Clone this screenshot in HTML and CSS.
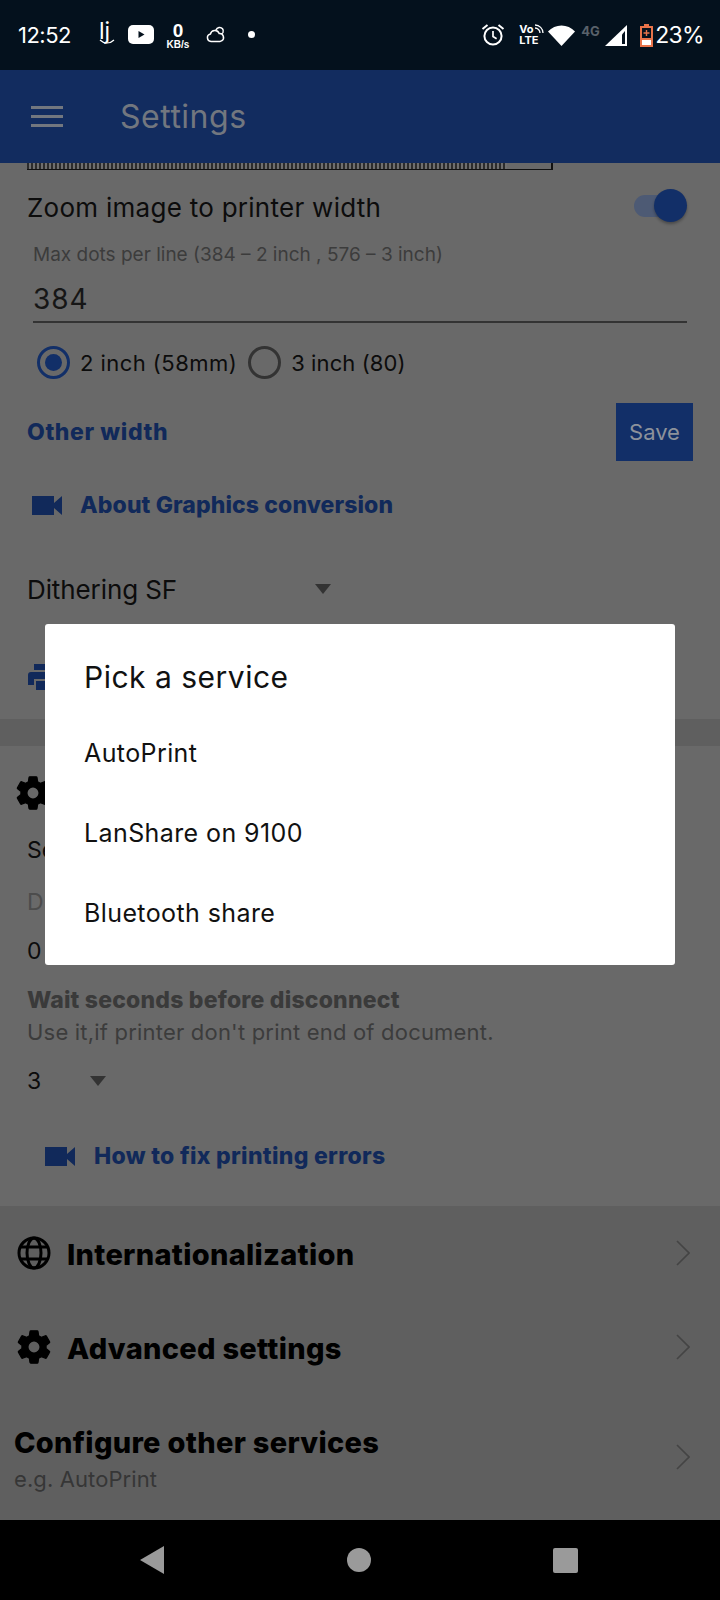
FILE: index.html
```html
<!DOCTYPE html>
<html lang="en">
<head>
    <meta name="viewport" content="width=device-width, initial-scale=1.0">
    <link rel="stylesheet" href="styles.css">
    <title>Settings</title>
</head>

<body>
    <svg class="defs" width="0" height="0">
        <symbol id="gear" viewBox="2 1.3 20 21.4">
            <path fill-rule="evenodd" stroke="#000" stroke-width="0.7" stroke-linejoin="round" d="M19.14 12.94c.04-.3.06-.61.06-.94 0-.32-.02-.64-.07-.94l2.03-1.58c.18-.14.23-.41.12-.61l-1.92-3.32c-.12-.22-.37-.29-.59-.22l-2.39.96c-.5-.38-1.03-.7-1.62-.94l-.36-2.54c-.04-.24-.24-.41-.48-.41h-3.84c-.24 0-.43.17-.47.41l-.36 2.54c-.59.24-1.13.57-1.62.94l-2.39-.96c-.22-.08-.47 0-.59.22L2.74 8.87c-.12.21-.08.47.12.61l2.03 1.58c-.05.3-.09.63-.09.94s.02.64.07.94l-2.03 1.58c-.18.14-.23.41-.12.61l1.92 3.32c.12.22.37.29.59.22l2.39-.96c.5.38 1.03.7 1.62.94l.36 2.54c.05.24.24.41.48.41h3.84c.24 0 .44-.17.47-.41l.36-2.54c.59-.24 1.13-.56 1.62-.94l2.39.96c.22.08.47 0 .59-.22l1.92-3.32c.12-.22.07-.47-.12-.61l-2.01-1.58zM12 15.600c-1.98 0-3.6-1.62-3.6-3.6s1.62-3.6 3.6-3.6 3.6 1.62 3.6 3.6-1.62 3.6-3.6 3.6z"/>
        </symbol>
        <symbol id="video" viewBox="0 0 30 20">
            <path d="M0 1h22v19H0zM22 8l8-7v19l-8-7z"/>
        </symbol>
        <symbol id="chevron" viewBox="0 0 14 26">
            <path d="M1 1l12 12L1 25" fill="none" stroke="#444" stroke-width="1.6"/>
        </symbol>
    </svg>

    <div class="status-bar">
        <span class="clock">12:52</span>
        <span class="app-mark">lj
            <svg width="16" height="6" viewBox="0 0 16 6"><path d="M1 1c4 4 10 4 14 0" fill="none" stroke="#fff" stroke-width="1.2"/></svg>
        </span>
        <svg class="yt" width="26" height="19" viewBox="0 0 26 19">
            <rect width="26" height="19" rx="5" fill="#fff"/>
            <path d="M10.500 6l6 3.500-6 3.500z" fill="#04111d"/>
        </svg>
        <span class="speed"><b>0</b><i>KB/s</i></span>
        <svg class="cloud" width="20" height="17" viewBox="0 0 20 17">
            <path d="M5 15.5a3.8 3.8 0 0 1-.6-7.5 4.6 4.6 0 0 1 8.8-.6 4 4 0 0 1 2.4 7.4 3 3 0 0 1-1.6.7z M10 4a4 4 0 0 1 3-2.5 3.6 3.6 0 0 1 4 5 3.4 3.4 0 0 1-1.6 1.5" fill="none" stroke="#fff" stroke-width="1.5"/>
        </svg>
        <span class="dot"></span>

        <div class="status-right">
            <svg width="24" height="24" viewBox="0 0 24 24">
                <circle cx="12" cy="13" r="8.6" fill="none" stroke="#fff" stroke-width="2"/>
                <path d="M12 8v5.5l3.6 2.2" fill="none" stroke="#fff" stroke-width="1.7"/>
                <path d="M1.5 6l5-4M22.500 6l-5-4" fill="none" stroke="#fff" stroke-width="2"/>
            </svg>
            <span class="volte">
                <span class="vo">Vo<svg width="10" height="10" viewBox="0 0 10 10"><path d="M1 1a8 8 0 0 1 8 8M1 4a5 5 0 0 1 5 5" fill="none" stroke="#fff" stroke-width="1.3"/></svg></span>
                <span>LTE</span>
            </span>
            <svg class="wifi" width="27" height="21" viewBox="0 0 27 21"><path d="M0 6.500C7-1.500 20-1.500 27 6.500L13.500 21z" fill="#fff"/></svg>
            <span class="net">4G</span>
            <svg class="signal" width="22" height="21" viewBox="0 0 22 21">
                <path d="M22 0v21H0z" fill="#fff"/>
                <path d="M20 6v13h-3V9.500z" fill="#04111d"/>
            </svg>
            <svg class="battery" width="13" height="23" viewBox="0 0 13 23">
                <path d="M4 0h5v2h4v21H0V2h4z" fill="#e8734a"/>
                <rect x="2" y="4" width="9" height="10" fill="#04111d"/>
                <rect x="2" y="16" width="9" height="5" fill="#fff"/>
                <path d="M5.800 6h1.400v2.300h2.300v1.400H7.200V12H5.800V9.700H3.500V8.300h2.300z" fill="#e8734a"/>
            </svg>
            <span class="percent">23%</span>
        </div>
    </div>

    <header class="app-bar">
        <div class="menu-icon"><span></span><span></span><span></span></div>
        <span class="app-title">Settings</span>
    </header>

    <main>
        <section class="panel">
            <div class="ruler"></div>

            <div class="row toggle-row">
                <span class="text-lg">Zoom image to printer width</span>
                <div class="switch"><span class="knob"></span></div>
            </div>

            <div class="hint">Max dots per line (384 – 2 inch , 576 – 3 inch)</div>
            <div class="dots-input">384</div>

            <div class="row radios">
                <span class="radio checked"></span>
                <span class="radio-label">2 inch (58mm)</span>
                <span class="radio"></span>
                <span class="radio-label narrow">3 inch (80)</span>
            </div>

            <div class="row width-row">
                <a class="link">Other width</a>
                <button class="save">Save</button>
            </div>

            <div class="row video-row">
                <svg class="video-icon" width="30" height="20"><use href="#video"/></svg>
                <a class="link">About Graphics conversion</a>
            </div>

            <div class="row dither-row">
                <span class="text-lg dither-name">Dithering SF</span>
                <span class="caret"></span>
            </div>

            <div class="row print-row">
                <svg class="print-icon" width="30" height="26" viewBox="0 0 30 26">
                    <path d="M6 0h18v6H6zM3 8h24a3 3 0 0 1 3 3v10h-6v-6H6v6H0V11a3 3 0 0 1 3-3zM8 17h14v9H8z"/>
                </svg>
            </div>
        </section>

        <div class="band"></div>

        <section class="panel">
            <div class="row gear-row">
                <svg class="gear" width="34" height="36"><use href="#gear"/></svg>
            </div>
            <div class="text-md line-se">Se</div>
            <div class="text-md muted line-d">D</div>
            <div class="text-md line-zero">0</div>
            <div class="wait-title">Wait seconds before disconnect</div>
            <div class="wait-hint">Use it,if printer don't print end of document.</div>
            <div class="row wait-row">
                <span class="text-md wait-value">3</span>
                <span class="caret"></span>
            </div>
            <div class="row errors-row">
                <svg class="video-icon" width="30" height="20"><use href="#video"/></svg>
                <a class="link">How to fix printing errors</a>
            </div>
        </section>

        <section class="panel dark">
            <div class="row nav-row">
                <svg class="row-icon" width="34" height="34" viewBox="0 0 34 34" fill="none" stroke="#000" stroke-width="3">
                    <circle cx="17" cy="17" r="15"/>
                    <ellipse cx="17" cy="17" rx="7" ry="15"/>
                    <path d="M3.500 11h27M3.500 23h27"/>
                </svg>
                <span class="row-title">Internationalization</span>
                <svg class="chevron" width="14" height="26"><use href="#chevron"/></svg>
            </div>
            <div class="row nav-row">
                <svg class="row-icon gear" width="34" height="36"><use href="#gear"/></svg>
                <span class="row-title">Advanced settings</span>
                <svg class="chevron" width="14" height="26"><use href="#chevron"/></svg>
            </div>
            <div class="row other-row">
                <div class="other-text">
                    <div class="row-title">Configure other services</div>
                    <div class="other-hint">e.g. AutoPrint</div>
                </div>
                <svg class="chevron" width="14" height="26"><use href="#chevron"/></svg>
            </div>
        </section>
    </main>

    <nav class="nav-bar">
        <span class="nav-back"></span>
        <span class="nav-home"></span>
        <span class="nav-recent"></span>
    </nav>

    <div class="dialog">
        <h2>Pick a service</h2>
        <div class="dialog-item">AutoPrint</div>
        <div class="dialog-item">LanShare on 9100</div>
        <div class="dialog-item">Bluetooth share</div>
    </div>
</body>

</html>
```

FILE: styles.css
```css
body {
    font-family: Inter, "Open Sans", sans-serif;
    margin: 0;
    padding: 0;
    width: 720px;
    height: 1600px;
    position: relative;
    overflow: hidden;
    background-color: #000;
    color: #0c0c0c;
}

a {
    text-decoration: none;
}

.defs {
    position: absolute;
}

.row {
    display: flex;
    align-items: center;
}

/* status bar */
.status-bar {
    height: 70px;
    background-color: #04111d;
    color: #fff;
    display: flex;
    align-items: center;
    padding-left: 18px;
    padding-right: 16px;
    box-sizing: border-box;
}

.clock {
    font-size: 22px;
    width: 80px;
    letter-spacing: -0.5px;
}

.app-mark {
    width: 30px;
    font-size: 23px;
    line-height: 20px;
    display: flex;
    flex-direction: column;
    align-items: flex-start;
    padding-left: 1px;
    box-sizing: border-box;
    margin-top: -5px;
}

.app-mark svg {
    margin-top: -2px;
}

.yt {
    margin-right: 11px;
    margin-top: -1px;
}

.speed {
    width: 26px;
    display: flex;
    flex-direction: column;
    align-items: center;
    font-family: "Liberation Sans", sans-serif;
    margin-top: 3px;
}

.speed b {
    font-size: 19px;
    line-height: 16px;
}

.speed i {
    font-style: normal;
    font-weight: bold;
    font-size: 10px;
    line-height: 11px;
}

.cloud {
    margin-left: 15px;
    margin-top: -1px;
}

.dot {
    width: 7px;
    height: 7px;
    border-radius: 50%;
    background-color: #fff;
    margin-left: 22px;
    margin-top: -2px;
}

.status-right {
    margin-left: auto;
    display: flex;
    align-items: center;
}

.volte {
    width: 25px;
    margin-left: 14px;
    font-size: 11px;
    font-weight: 700;
    line-height: 11px;
    display: flex;
    flex-direction: column;
    margin-top: -1px;
}

.vo {
    display: flex;
    align-items: flex-start;
}

.wifi {
    margin-left: 4px;
}

.net {
    width: 20px;
    margin-left: 6px;
    font-size: 13px;
    font-weight: 700;
    color: #59616a;
    margin-top: -9px;
}

.signal {
    margin-left: 4px;
}

.battery {
    margin-left: 13px;
    margin-top: 1px;
}

.percent {
    font-size: 23px;
    margin-left: 2px;
    letter-spacing: -0.7px;
}

/* app bar */
.app-bar {
    height: 93px;
    background-color: #122c5f;
    display: flex;
    align-items: center;
    padding-left: 31px;
}

.menu-icon {
    width: 32px;
    height: 21px;
    display: flex;
    flex-direction: column;
    justify-content: space-between;
    margin-right: 57px;
}

.menu-icon span {
    height: 3px;
    background-color: #72777f;
}

.app-title {
    font-size: 32px;
    color: #72777f;
    letter-spacing: 0.5px;
}

/* content */
.panel {
    background-color: #696969;
}

.panel.dark {
    background-color: #5f5f5f;
    height: 314px;
}

.band {
    height: 27px;
    background-color: #5f5f5f;
}

.ruler {
    width: 526px;
    height: 7px;
    margin-left: 27px;
    box-sizing: border-box;
    border-bottom: 1px solid #111;
    border-right: 2px solid #111;
    background-image: repeating-linear-gradient(90deg, #2c2c2c 0, #2c2c2c 2px, #6f6f6f 2px, #6f6f6f 4px);
    background-size: 480px 100%;
    background-repeat: no-repeat;
}

.text-lg {
    font-size: 26px;
    letter-spacing: 0.27px;
}

.text-md {
    font-size: 23px;
    padding-left: 27px;
}

.muted {
    color: #4c4c4c;
}

.toggle-row {
    height: 72px;
    padding-left: 27px;
    padding-right: 50px;
    justify-content: space-between;
}

.toggle-row .text-lg {
    margin-top: 3px;
}

.switch {
    width: 36px;
    height: 22px;
    border-radius: 11px;
    background-color: #4d5a74;
    position: relative;
}

.knob {
    position: absolute;
    top: -6px;
    right: -17px;
    width: 33px;
    height: 33px;
    border-radius: 50%;
    background-color: #122f68;
    box-shadow: 0 2px 3px rgba(0, 0, 0, 0.3);
}

.hint {
    height: 26px;
    line-height: 26px;
    padding-left: 33px;
    font-size: 19px;
    color: #3c3c3c;
}

.dots-input {
    height: 53px;
    line-height: 63px;
    margin: 0 33px;
    font-size: 28px;
    letter-spacing: 1px;
    color: #161616;
    border-bottom: 2px solid #333;
    box-sizing: content-box;
}

.radios {
    height: 79px;
    padding-left: 37px;
}

.radio {
    width: 33px;
    height: 33px;
    box-sizing: border-box;
    border-radius: 50%;
    border: 3px solid #333;
    position: relative;
}

.radio.checked {
    border-color: #122f68;
}

.radio.checked::after {
    content: "";
    position: absolute;
    left: 5px;
    top: 5px;
    width: 17px;
    height: 17px;
    border-radius: 50%;
    background-color: #122f68;
}

.radio-label {
    font-size: 22px;
    margin-left: 10px;
    margin-right: 11px;
    letter-spacing: 0.45px;
}

.radio-label.narrow {
    letter-spacing: 0.1px;
}

.link {
    font-size: 23px;
    font-weight: 800;
    color: #11295a;
    letter-spacing: 0.1px;
}

.width-row {
    height: 60px;
    padding-left: 27px;
    padding-right: 27px;
    justify-content: space-between;
}

.width-row .link {
    letter-spacing: 0.6px;
}

.save {
    width: 77px;
    height: 58px;
    background-color: #122f68;
    color: #8d929b;
    font-family: inherit;
    font-size: 22px;
    border: none;
    padding: 0;
}

.video-row {
    height: 86px;
    padding-left: 32px;
}

.video-icon {
    fill: #11295a;
    margin-right: 18px;
}

.dither-row {
    height: 82px;
    padding-left: 27px;
}

.dither-name {
    width: 288px;
    letter-spacing: -0.1px;
}

.caret {
    width: 0;
    height: 0;
    border-left: 8px solid transparent;
    border-right: 8px solid transparent;
    border-top: 10px solid #333;
}

.print-row {
    height: 89px;
    padding-left: 28px;
}

.print-icon {
    fill: #11295a;
    margin-right: 18px;
    margin-top: 4px;
}

.gear-row {
    height: 94px;
    padding-left: 16px;
}

.gear {
    fill: #000;
    margin-right: 16px;
}

.line-se {
    height: 20px;
    line-height: 20px;
}

.line-d {
    height: 36px;
    line-height: 36px;
    margin-top: 24px;
}

.line-zero {
    height: 42px;
    line-height: 42px;
    margin-top: 10px;
}

.wait-title {
    height: 28px;
    line-height: 28px;
    margin-top: 14px;
    padding-left: 27px;
    font-size: 23px;
    font-weight: 800;
    color: #3a3a3a;
    letter-spacing: 0.2px;
}

.wait-hint {
    height: 34px;
    line-height: 36px;
    padding-left: 27px;
    font-size: 22px;
    color: #3c3c3c;
    letter-spacing: 0.2px;
}

.wait-row {
    height: 46px;
    margin-top: 10px;
}

.wait-value {
    width: 63px;
}

.errors-row {
    height: 102px;
    padding-left: 45px;
    box-sizing: border-box;
    padding-top: 2px;
}

.errors-row .video-icon {
    margin-right: 19px;
}

.errors-row .link {
    letter-spacing: 0.3px;
}

.nav-row {
    height: 94px;
    padding-left: 17px;
    padding-right: 30px;
}

.nav-row .row-title {
    margin-top: 3px;
}

.row-icon {
    margin-right: 16px;
}

.row-title {
    font-size: 29px;
    font-weight: 800;
    color: #000;
    letter-spacing: 0.3px;
}

.chevron {
    margin-left: auto;
}

.other-row {
    height: 126px;
    padding-left: 14px;
    padding-right: 30px;
}

.other-text {
    margin-top: 6px;
}

.other-hint {
    font-size: 22px;
    color: #363636;
    margin-top: 3px;
    line-height: 32px;
    letter-spacing: 0.1px;
}

.other-row .row-title {
    line-height: 34px;
}

/* nav bar */
.nav-bar {
    height: 80px;
    background-color: #000;
    display: flex;
    align-items: center;
    padding-left: 140px;
    padding-right: 142px;
    justify-content: space-between;
}

.nav-back {
    width: 0;
    height: 0;
    border-top: 14px solid transparent;
    border-bottom: 14px solid transparent;
    border-right: 24px solid #9a9a9a;
}

.nav-home {
    width: 24px;
    height: 24px;
    border-radius: 50%;
    background-color: #9a9a9a;
}

.nav-recent {
    width: 25px;
    height: 25px;
    border-radius: 2px;
    background-color: #9a9a9a;
}

/* dialog */
.dialog {
    position: absolute;
    left: 45px;
    top: 624px;
    width: 630px;
    height: 341px;
    background-color: #fff;
    border-radius: 3px;
    padding-left: 39px;
    box-sizing: border-box;
}

.dialog h2 {
    margin: 0;
    height: 90px;
    line-height: 107px;
    font-size: 30px;
    font-weight: 400;
    color: #111;
    letter-spacing: 0.5px;
}

.dialog-item {
    height: 80px;
    line-height: 78px;
    font-size: 25px;
    color: #111;
    letter-spacing: 0.4px;
}
```
